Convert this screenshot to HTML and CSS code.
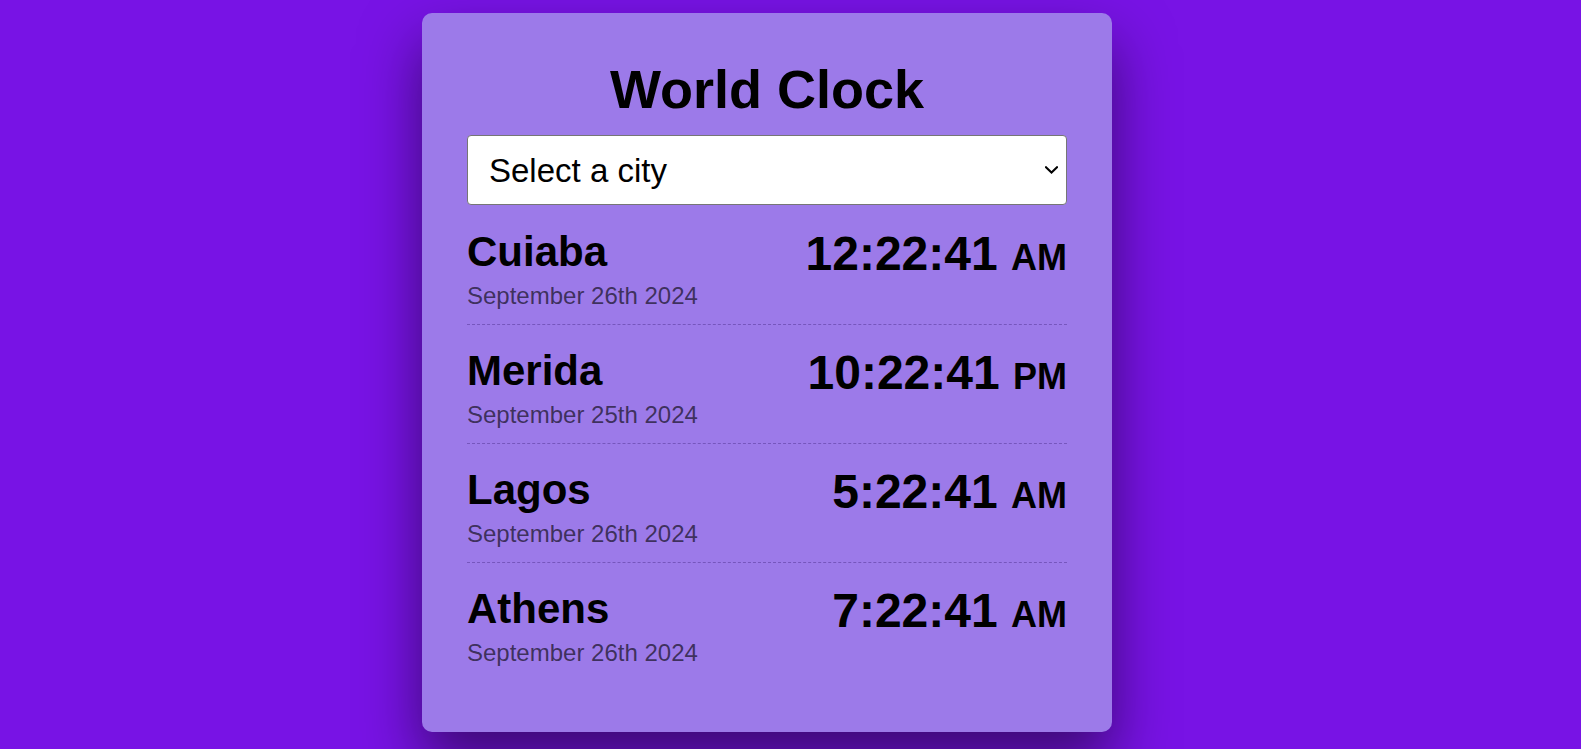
FILE: index.html
```html
<!DOCTYPE html>
<html lang="en">
<head>
<meta charset="utf-8">
<title>World Clock</title>
<link rel="stylesheet" href="styles.css">
</head>
<body>
<div class="page">
  <main class="card">
    <h1 class="title">World Clock</h1>
    <div class="select-wrap">
      <select class="city-select">
        <option>Select a city</option>
        <option>Cuiaba</option>
        <option>Merida</option>
        <option>Lagos</option>
        <option>Athens</option>
      </select>
      <svg class="select-arrow" width="13" height="8" viewBox="0 0 13 8" aria-hidden="true">
        <path d="M1 1.2 L6.5 6.5 L12 1.2" fill="none" stroke="#000" stroke-width="2" stroke-linecap="square"/>
      </svg>
    </div>
    <div class="cities">
      <div class="city">
        <div class="city-info">
          <h2 class="city-name">Cuiaba</h2>
          <div class="city-date">September 26th 2024</div>
        </div>
        <div class="city-time">12:22:41 <small class="ampm">AM</small></div>
      </div>
      <div class="city">
        <div class="city-info">
          <h2 class="city-name">Merida</h2>
          <div class="city-date">September 25th 2024</div>
        </div>
        <div class="city-time">10:22:41 <small class="ampm">PM</small></div>
      </div>
      <div class="city">
        <div class="city-info">
          <h2 class="city-name">Lagos</h2>
          <div class="city-date">September 26th 2024</div>
        </div>
        <div class="city-time">5:22:41 <small class="ampm">AM</small></div>
      </div>
      <div class="city last">
        <div class="city-info">
          <h2 class="city-name">Athens</h2>
          <div class="city-date">September 26th 2024</div>
        </div>
        <div class="city-time">7:22:41 <small class="ampm">AM</small></div>
      </div>
    </div>
  </main>
</div>
</body>
</html>
```

FILE: styles.css
```css
html, body {
  margin: 0;
  padding: 0;
}

body {
  background: #7813e5;
  font-family: "Liberation Sans", Arial, sans-serif;
  color: #000;
  min-height: 749px;
  overflow: hidden;
}

.page {
  display: flex;
  justify-content: center;
  padding: 13px 47px 0 0;
}

.card {
  box-sizing: border-box;
  width: 690px;
  background: #9c7ae9;
  border-radius: 10px;
  padding: 45px 45px 50px 45px;
  box-shadow: 0 30px 60px rgba(0, 0, 0, 0.5);
}

.title {
  margin: 0 0 15px 0;
  font-size: 54px;
  line-height: 62px;
  font-weight: 700;
  text-align: center;
}

.select-wrap {
  position: relative;
  margin: 0 0 1px 0;
}

.city-select {
  display: block;
  box-sizing: border-box;
  width: 100%;
  height: 70px;
  margin: 0;
  padding: 0 40px 0 21px;
  font-family: "Liberation Sans", Arial, sans-serif;
  font-size: 33px;
  color: #000;
  background: #fff;
  border: 1px solid #767676;
  border-radius: 4px;
  -webkit-appearance: none;
  appearance: none;
}

.select-arrow {
  position: absolute;
  right: 9px;
  top: 31px;
  pointer-events: none;
}

.city {
  display: flex;
  justify-content: space-between;
  align-items: flex-start;
  padding: 20px 0 14px 0;
  border-bottom: 1px dashed rgba(50, 20, 110, 0.35);
}

.city.last {
  border-bottom-color: transparent;
}

.city-info {
  padding-top: 2px;
}

.city-name {
  margin: 0;
  font-size: 42px;
  line-height: 48px;
  font-weight: 700;
}

.city-date {
  margin-top: 6px;
  font-size: 24px;
  line-height: 28px;
  color: rgba(0, 0, 0, 0.62);
}

.city-time {
  font-size: 48px;
  line-height: 56px;
  font-weight: 700;
  text-align: right;
}

.ampm {
  font-size: 36px;
}
```
